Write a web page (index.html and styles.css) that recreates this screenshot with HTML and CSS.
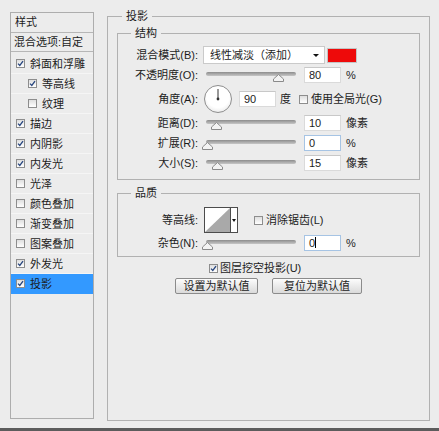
FILE: index.html
```html
<!DOCTYPE html>
<html lang="zh-CN">
<head>
<meta charset="utf-8">
<title>图层样式 - 投影</title>
<link rel="stylesheet" href="styles.css">
</head>
<body>
<div class="dialog">
  <div class="main">
    <div class="styles">
      <div class="hdr">样式</div>
      <div class="blend">混合选项:自定</div>
      <ul class="list">
        <li><span class="cb on"><svg viewBox="0 0 7 7"><path d="M1 3.6 L2.8 5.4 L6 1.2"/></svg></span>斜面和浮雕</li>
        <li class="sub"><span class="cb on"><svg viewBox="0 0 7 7"><path d="M1 3.6 L2.8 5.4 L6 1.2"/></svg></span>等高线</li>
        <li class="sub"><span class="cb"></span>纹理</li>
        <li><span class="cb on"><svg viewBox="0 0 7 7"><path d="M1 3.6 L2.8 5.4 L6 1.2"/></svg></span>描边</li>
        <li><span class="cb on"><svg viewBox="0 0 7 7"><path d="M1 3.6 L2.8 5.4 L6 1.2"/></svg></span>内阴影</li>
        <li><span class="cb on"><svg viewBox="0 0 7 7"><path d="M1 3.6 L2.8 5.4 L6 1.2"/></svg></span>内发光</li>
        <li><span class="cb"></span>光泽</li>
        <li><span class="cb"></span>颜色叠加</li>
        <li><span class="cb"></span>渐变叠加</li>
        <li><span class="cb"></span>图案叠加</li>
        <li><span class="cb on"><svg viewBox="0 0 7 7"><path d="M1 3.6 L2.8 5.4 L6 1.2"/></svg></span>外发光</li>
        <li class="sel"><span class="cb on"><svg viewBox="0 0 7 7"><path d="M1 3.6 L2.8 5.4 L6 1.2"/></svg></span>投影</li>
      </ul>
    </div>

    <fieldset class="outer">
      <legend>投影</legend>

      <fieldset class="grp struct">
        <legend>结构</legend>
        <div class="row r1">
          <span class="lbl">混合模式(B):</span>
          <div class="select">线性减淡（添加）<span class="arrow"></span></div>
          <span class="swatch"></span>
        </div>
        <div class="row r2">
          <span class="lbl">不透明度(O):</span>
          <div class="slider"><span class="track"></span><svg class="thumb" style="left:75px" width="11" height="8" viewBox="0 0 11 8"><path d="M5.5 0.5 L10.5 5 L10.5 7.5 L0.5 7.5 L0.5 5 Z"/></svg></div>
          <span class="num">80</span>
          <span class="unit">%</span>
        </div>
        <div class="row r3">
          <span class="lbl">角度(A):</span>
          <div class="dial"><svg width="26" height="26" viewBox="0 0 26 26"><line x1="13" y1="13" x2="13" y2="3"/><circle cx="13" cy="13" r="1.4"/></svg></div>
          <span class="num n-angle">90</span>
          <span class="unit">度</span>
          <span class="cb gl"></span>
          <span class="cbl">使用全局光(G)</span>
        </div>
        <div class="row r4">
          <span class="lbl">距离(D):</span>
          <div class="slider"><span class="track"></span><svg class="thumb" style="left:13px" width="11" height="8" viewBox="0 0 11 8"><path d="M5.5 0.5 L10.5 5 L10.5 7.5 L0.5 7.5 L0.5 5 Z"/></svg></div>
          <span class="num">10</span>
          <span class="unit">像素</span>
        </div>
        <div class="row">
          <span class="lbl">扩展(R):</span>
          <div class="slider"><span class="track"></span><svg class="thumb" style="left:4px" width="11" height="8" viewBox="0 0 11 8"><path d="M5.5 0.5 L10.5 5 L10.5 7.5 L0.5 7.5 L0.5 5 Z"/></svg></div>
          <span class="num focus">0</span>
          <span class="unit">%</span>
        </div>
        <div class="row">
          <span class="lbl">大小(S):</span>
          <div class="slider"><span class="track"></span><svg class="thumb" style="left:14px" width="11" height="8" viewBox="0 0 11 8"><path d="M5.5 0.5 L10.5 5 L10.5 7.5 L0.5 7.5 L0.5 5 Z"/></svg></div>
          <span class="num">15</span>
          <span class="unit">像素</span>
        </div>
      </fieldset>

      <fieldset class="grp quality">
        <legend>品质</legend>
        <div class="row q1">
          <span class="lbl">等高线:</span>
          <div class="contour">
            <svg class="cprev" width="25" height="24" viewBox="0 0 25 24"><path d="M0 24 L25 0 L25 24 Z"/></svg>
            <span class="cdrop"><span class="arrow"></span></span>
          </div>
          <span class="cb aa"></span>
          <span class="cbl">消除锯齿(L)</span>
        </div>
        <div class="row q2">
          <span class="lbl">杂色(N):</span>
          <div class="slider"><span class="track"></span><svg class="thumb" style="left:4px" width="11" height="8" viewBox="0 0 11 8"><path d="M5.5 0.5 L10.5 5 L10.5 7.5 L0.5 7.5 L0.5 5 Z"/></svg></div>
          <span class="num focus">0<span class="caret"></span></span>
          <span class="unit">%</span>
        </div>
      </fieldset>

      <div class="knock">
        <span class="cb on"><svg viewBox="0 0 7 7"><path d="M1 3.6 L2.8 5.4 L6 1.2"/></svg></span>
        <span>图层挖空投影(U)</span>
      </div>
      <div class="btns">
        <button class="btn b1">设置为默认值</button>
        <button class="btn b2">复位为默认值</button>
      </div>
    </fieldset>
  </div>
  <div class="bar"></div>
</div>
</body>
</html>
```

FILE: styles.css
```css
* { box-sizing: border-box; }
html, body { margin: 0; padding: 0; }
body {
  width: 439px;
  height: 431px;
  overflow: hidden;
  background: #ececec;
  color: #1c1c1c;
  font: 11px/14px "Liberation Sans", "Noto Sans CJK SC", sans-serif;
}
.dialog { height: 431px; display: flex; flex-direction: column; }
.main {
  flex: 1;
  display: flex;
  align-items: flex-start;
  padding: 9px 0 0 10px;
}

/* left style list */
.styles {
  width: 84px;
  height: 407px;
  margin-top: 3px;
  border: 1px solid #adadad;
  flex: none;
}
.hdr {
  height: 20px;
  padding-left: 4px;
  line-height: 19px;
  border-bottom: 1px solid #b6b6b6;
}
.blend {
  height: 19px;
  padding-left: 3px;
  line-height: 18px;
  border-bottom: 1px solid #b6b6b6;
}
.list { list-style: none; margin: 2px 0 0; padding: 0; }
.list li {
  height: 20px;
  display: flex;
  align-items: center;
  padding-left: 5px;
  border-bottom: 1px solid #f5f5f5;
}
.list li.sub { padding-left: 17px; }
.list li.sel { background: #3399ff; border-bottom-color: #3399ff; }

.cb {
  width: 9px;
  height: 9px;
  flex: none;
  margin-right: 5px;
  border: 1px solid #8d8d8d;
  background: linear-gradient(#dedede, #ffffff);
  display: inline-flex;
}
.cb svg { width: 7px; height: 7px; }
.cb svg path { fill: none; stroke: #27457e; stroke-width: 1.3; }

/* right fieldsets */
fieldset { margin: 0; padding: 0; min-width: 0; }
legend { padding: 0 4px; line-height: 14px; }
.outer {
  width: 323px;
  height: 412px;
  margin-left: 13px;
  border: 1px solid #b1b1b1;
  flex: none;
}
.outer > legend { margin-left: 14px; }
.grp {
  margin: 0 9px 0 9px;
  border: 1px solid #b1b1b1;
}
.grp > legend { margin-left: 13px; }
.struct { margin-top: 3px; padding: 5px 0 6px; }
.quality { margin-top: 6px; padding: 7px 0 3px; }

.row { display: flex; align-items: center; height: 20px; }
.row + .row { margin-top: 0; }
.r2 { margin-top: 2px; }
.r3 { height: 28px; margin-top: 4px; }
.r4 { margin-top: 4px; }
.q1 { height: 26px; }
.q2 { margin-top: 5px; }

.lbl {
  width: 80px;
  flex: none;
  text-align: right;
  margin-right: 5px;
  white-space: nowrap;
}

.select {
  width: 122px;
  height: 18px;
  display: flex;
  align-items: center;
  padding-left: 6px;
  background: #fff;
  border: 1px solid #cacaca;
  white-space: nowrap;
}
.arrow {
  width: 0;
  height: 0;
  border-left: 3px solid transparent;
  border-right: 3px solid transparent;
  border-top: 3px solid #111;
}
.select .arrow { margin-left: auto; margin-right: 5px; }
.swatch {
  width: 30px;
  height: 15px;
  margin-left: 2px;
  background: #ee0a0a;
  border: 1px solid #c4c4c4;
}

.slider { position: relative; width: 95px; height: 20px; flex: none; }
.track {
  position: absolute;
  left: 3px;
  right: 2px;
  top: 7px;
  height: 4px;
  border-radius: 2px;
  background: linear-gradient(#8c8c8c, #c6c6c6);
}
.thumb { position: absolute; top: 9px; margin-left: -5px; }
.thumb path { fill: #f3f3f3; stroke: #8a8a8a; stroke-width: 1; }

.num {
  width: 37px;
  height: 16px;
  flex: none;
  margin-left: 6px;
  padding-left: 4px;
  line-height: 14px;
  background: #fff;
  border: 1px solid #dadada;
  border-top-color: #c8c8c8;
}
.num.focus { border-color: #a6c4e4; }
.caret {
  display: inline-block;
  width: 1px;
  height: 11px;
  background: #000;
  vertical-align: -1px;
}
.unit { margin-left: 5px; white-space: nowrap; }

.dial {
  width: 28px;
  height: 28px;
  flex: none;
  margin-left: 1px;
  border-radius: 50%;
  border: 1px solid #8e8e8e;
  background: radial-gradient(circle at 50% 40%, #ffffff 55%, #dcdcdc 100%);
}
.dial svg { display: block; }
.dial line { stroke: #333; stroke-width: 1; }
.dial circle { fill: #333; }
.n-angle { margin-left: 7px; }
.r3 .unit { margin-left: 4px; }
.cb.gl { margin-left: 8px; margin-right: 3px; }
.cbl { white-space: nowrap; }

.contour {
  width: 34px;
  height: 26px;
  flex: none;
  margin-left: 1px;
  display: flex;
  background: #fff;
  border: 1px solid #4c4c4c;
}
.cprev { display: block; flex: none; }
.cprev path { fill: #a9a9a9; }
.cdrop {
  flex: 1;
  border-left: 1px solid #4c4c4c;
  display: flex;
  align-items: center;
  justify-content: center;
}
.cdrop .arrow { border-width: 3px 2px 0 2px; }
.cb.aa { margin-left: 16px; margin-right: 3px; }

.knock {
  display: flex;
  align-items: center;
  height: 14px;
  margin: 4px 0 0 101px;
}
.knock .cb { margin-right: 2px; }

.btns {
  display: flex;
  justify-content: center;
  gap: 14px;
  margin-top: 3px;
}
.btn {
  height: 16px;
  padding: 0;
  font: inherit;
  line-height: 14px;
  color: #1c1c1c;
  text-align: center;
  border: 1px solid #8b8b8b;
  border-radius: 2px;
  background: linear-gradient(#fcfcfc, #dadada);
}
.b1 { width: 83px; }
.b2 { width: 90px; }

.bar { height: 3px; background: #5c5c5c; flex: none; }
```
